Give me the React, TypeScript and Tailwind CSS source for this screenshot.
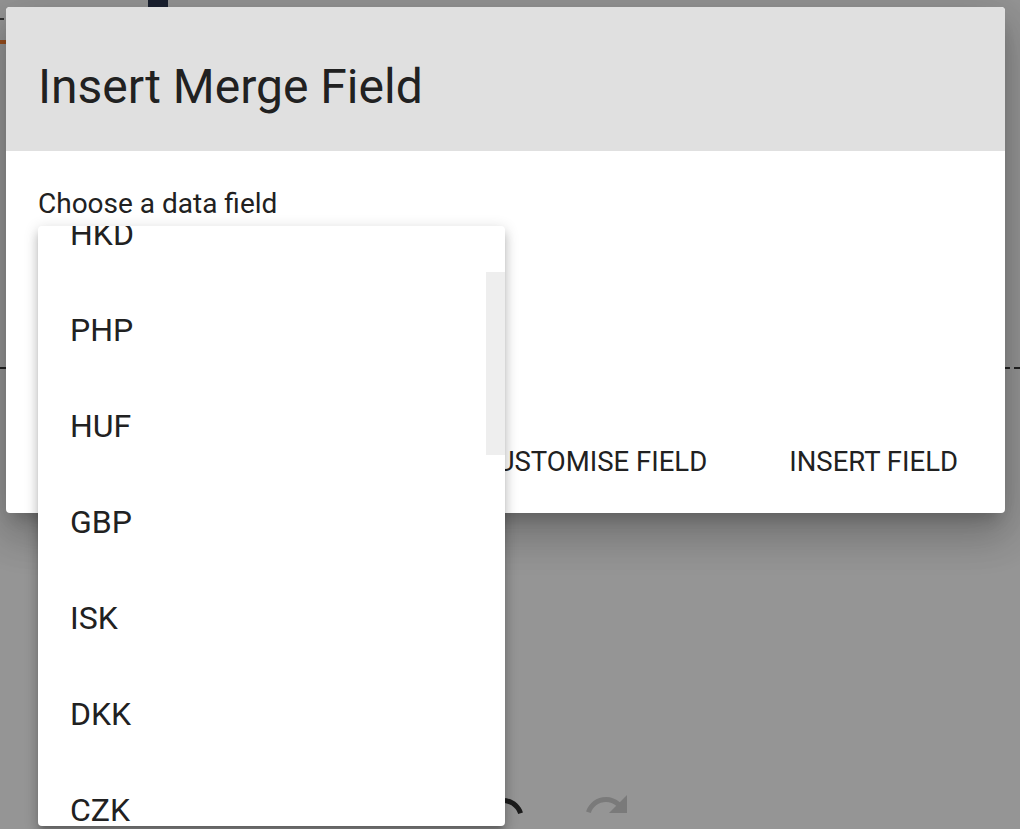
import React from 'react';

const currencies = ['HKD', 'PHP', 'HUF', 'GBP', 'ISK', 'DKK', 'CZK', 'PLN'];

function UndoIcon({ className }: { className?: string }) {
  return (
    <svg viewBox="0 0 24 24" className={className} fill="currentColor">
      <path d="M12.5 8c-2.65 0-5.05.99-6.9 2.6L2 7v9h9l-3.62-3.62c1.39-1.16 3.160-1.88 5.12-1.88 3.54 0 6.55 2.31 7.6 5.5l2.37-.78C21.08 11.03 17.15 8 12.5 8z" />
    </svg>
  );
}

function RedoIcon({ className }: { className?: string }) {
  return (
    <svg viewBox="0 0 24 24" className={className} fill="currentColor">
      <path d="M18.4 10.6C16.55 8.99 14.15 8 11.5 8c-4.65 0-8.58 3.03-9.96 7.22L3.88 16c1.05-3.19 4.05-5.5 7.62-5.5 1.95 0 3.73.72 5.12 1.88L13 16h9V7l-3.6 3.6z" />
    </svg>
  );
}

export default function App() {
  return (
    <div
      className="relative w-[1020px] h-[829px] overflow-hidden bg-[#959595] text-[#212121]"
      style={{ fontFamily: 'Roboto, "Liberation Sans", sans-serif' }}
    >
      {/* page behind the backdrop */}
      <div className="absolute left-[148px] top-0 w-[20px] h-[8px] bg-[#1b2130]" />
      <div className="absolute left-0 top-[18px] w-[4px] h-[2px] bg-[#333]" />
      <div className="absolute left-0 top-[40px] w-[8px] h-[4px] bg-[#9a4f1f]" />
      <div className="absolute left-0 right-0 top-[367px] border-t-2 border-dashed border-[#222]" />
      <div className="absolute left-[478px] top-[782px] flex gap-[57px]">
        <UndoIcon className="w-[48px] h-[48px] text-[#1c1c1c]" />
        <RedoIcon className="w-[48px] h-[48px] text-[#7a7a7a] -mt-[1px]" />
      </div>

      {/* dialog */}
      <div className="absolute left-[6px] top-[7px] w-[999px] h-[506px] bg-white rounded-[4px] overflow-hidden shadow-[0_11px_15px_-7px_rgba(0,0,0,0.2),0_24px_38px_3px_rgba(0,0,0,0.14),0_9px_46px_8px_rgba(0,0,0,0.12)] flex flex-col">
        <div className="h-[144px] bg-[#e0e0e0] flex items-center px-[32px]">
          <h2 className="text-[48px] leading-none font-normal mt-[16px]">Insert Merge Field</h2>
        </div>
        <div className="flex-1 flex flex-col px-[32px] pt-[38px]">
          <p className="text-[28px] leading-[30px]">Choose a data field</p>
          <div className="mt-auto mb-[38px] flex justify-end items-center gap-[82px] pr-[15px]">
            <button className="text-[27.5px] leading-none uppercase">Customise field</button>
            <button className="text-[27.5px] leading-none uppercase">Insert field</button>
          </div>
        </div>
      </div>

      {/* open select menu */}
      <div className="absolute left-[38px] top-[226px] w-[467px] h-[600px] bg-white rounded-[4px] overflow-hidden shadow-[0_5px_5px_-3px_rgba(0,0,0,0.2),0_8px_10px_1px_rgba(0,0,0,0.14),0_3px_14px_2px_rgba(0,0,0,0.12)]">
        <div className="absolute right-0 top-[46px] w-[19px] h-[183px] bg-[#eeeeee]" />
        <ul className="-mt-[40px]">
          {currencies.map((c) => (
            <li key={c} className="h-[96px] flex items-center px-[32px] text-[32px]">
              {c}
            </li>
          ))}
        </ul>
      </div>
    </div>
  );
}
